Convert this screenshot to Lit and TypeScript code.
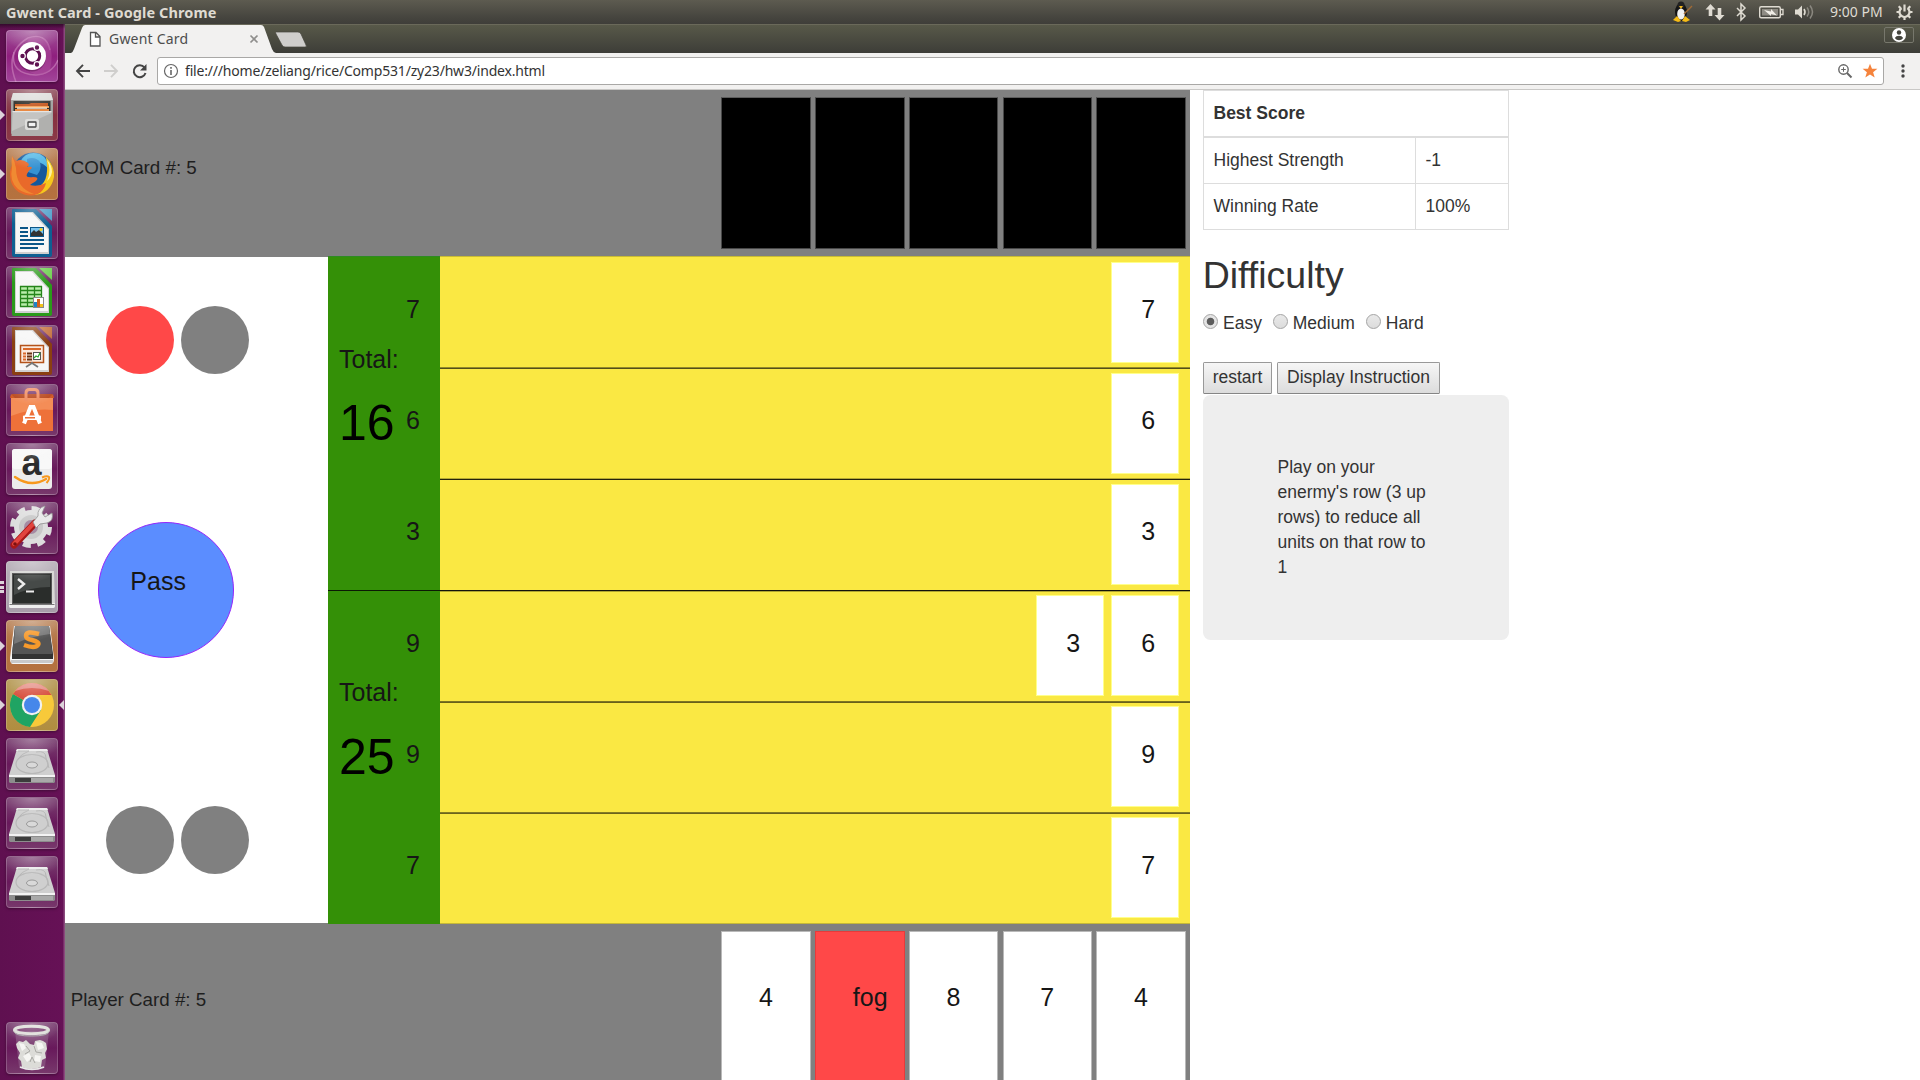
import { LitElement, html, css, svg, SVGTemplateResult } from "lit";
import { customElement, property } from "lit/decorators.js";

/* ---------- launcher artwork, every icon on a 52 x 52 grid ---------- */

const doc = (edge: string, light: string, body: SVGTemplateResult) => svg`
  <path d="M7 2h23l16 17v29q0 2-2 2H8q-2 0-2-2V3q0-1 1-1z" fill=${edge}/>
  <path d="M33 2h13v12z" fill=${light}/>
  <path d="M9 5h18l16 17v25H9z" fill="#d0d0d0"/>
  <path d="M10 6h16l16 17v22H10z" fill="#f7f7f7"/>
  ${body}`;

const drive = svg`
  <path d="M11 11h30l8 26H3z" fill="#cfcfcf"/>
  <path d="M11 11h30l1 2H10z" fill="#ececec"/>
  <path d="M12 13h11q-8 3-11 8M30 14q10-2 10 6l3 10" fill="none" stroke="#b5b5b5" stroke-width="1"/>
  <ellipse cx="26" cy="26" rx="16" ry="9.500" fill="none" stroke="#b8b8b8" stroke-width="1.200"/>
  <ellipse cx="26" cy="27" rx="5.500" ry="3" fill="#d9d9d9" stroke="#9a9a9a" stroke-width="1"/>
  <path d="M3 37h46v2H3z" fill="#f3f3f3"/>
  <path d="M3 39h46v5l-1 1H4l-1-1z" fill="#8d8d8d"/>
  <path d="M9 40h16v4H9z" fill="#3c3c3c"/>
  <path d="M25 40h22v4H25z" fill="#a9a9a9"/>`;

const art: Record<string, SVGTemplateResult> = {
  ubuntu: svg`
    <path d="M10 52Q-2 22 22 8Q40 2 44 20" fill="none" stroke="#c67ab8" stroke-width="1.500" opacity=".7"/>
    <path d="M8 22Q4 44 30 45Q46 44 52 30" fill="none" stroke="#c67ab8" stroke-width="1.500" opacity=".7"/>
    <path d="M22 8Q52 4 44 40Q34 48 24 42z" fill="#b04fa0" opacity=".5"/>
    <circle cx="26" cy="27.500" r="14" fill="#5b1450" opacity=".5"/>
    <circle cx="26" cy="26" r="14" fill="#fff"/>
    <circle cx="26.500" cy="26" r="7.200" fill="none" stroke="#5e1150" stroke-width="3"/>
    <g fill="#5e1150" stroke="#fff" stroke-width="1.200">
      <circle cx="16.500" cy="26" r="2.800"/><circle cx="31" cy="17.500" r="2.800"/><circle cx="31" cy="34.500" r="2.800"/>
    </g>`,
  files: svg`
    <path d="M7 4h38l2 7v33q0 1-1 1H6q-1 0-1-1V11z" fill="#a4a4a2"/>
    <path d="M7 4h38l2 7H5z" fill="#dededc"/>
    <path d="M7.500 12h37v11h-37z" fill="#33332f"/>
    <path d="M9 15h14l2-1h17v4H9z" fill="#c75a22"/>
    <path d="M9 17h34v2H9z" fill="#f3a45d"/>
    <path d="M11 18.500h30v1.300H11z" fill="#fff1df"/>
    <path d="M9 20h34v2H9z" fill="#e98a44"/>
    <path d="M6.500 22h39l1 25h-41z" fill="#b0b0ae"/>
    <path d="M6.500 22h39v1.500h-39z" fill="#e5e5e3"/>
    <path d="M6.500 24h39L6 42z" fill="#c4c4c2"/>
    <rect x="19" y="30" width="14" height="11" rx="2" fill="#dededc"/>
    <rect x="22" y="33" width="8" height="5" rx=".5" fill="#f2f2f2" stroke="#444" stroke-width="1.300"/>`,
  firefox: svg`
    <circle cx="27" cy="25" r="20.500" fill="#15589c"/>
    <path d="M14 14Q20 2 34 6Q42 10 43 22Q36 12 27 15z" fill="#4ab4e6"/>
    <path d="M21 11Q29 8 34 14Q36 22 31 27L22 24z" fill="#3592d2"/>
    <path d="M40 9Q49 18 48 29Q45 45 29 47Q24 42 34 38Q44 31 40 9z" fill="#f6c71d"/>
    <path d="M41 12Q46 22 41 33Q45 30 46 24Q46 17 41 12z" fill="#fff2a0"/>
    <path d="M6 8Q8 12 10 13Q16 10 22 15Q24 17 21 19Q26 18 26 20Q22 23 21 26Q19 30 27 29Q34 29 30 33Q25 36 24 37Q32 39 40 35Q37 47 25 47.500Q10 47 5 34Q2 22 7 16z" fill="#e9692a"/>
    <path d="M6 20Q3 33 12 41Q19 46 28 46Q10 40 10 20Q9 14 6 8Q5 14 6 20z" fill="#f08a32"/>`,
  writer: doc("#0e5f92", "#4f9fca", svg`
    <g stroke="#0b5688" stroke-width="2"><path d="M14 21h8M14 25h8M14 29h8M14 33h24M14 37h24M14 41h18"/></g>
    <rect x="24.500" y="20.500" width="13" height="9" fill="#7cc4ee" stroke="#0b5688"/>
    <path d="M25 29v-3l3-3 2 2 3-2 4 4v2z" fill="#333"/><circle cx="35" cy="22.500" r="1.500" fill="#f5d020"/>`),
  calc: doc("#2a9a1a", "#6cd04d", svg`
    <rect x="14" y="20" width="22" height="20" fill="#b9edaa"/>
    <path d="M14 20.500h22M14 24.500h22M14 28.500h22M14 32.500h22M14 36.500h22M14 40.500h22M14.500 20v21M21.500 20v21M28.500 20v21M35.500 20v12" stroke="#25851a" stroke-width="1.300"/>
    <rect x="27.500" y="31.500" width="10" height="10" fill="#fff" stroke="#888"/>
    <path d="M28 36h3v5h-3z" fill="#1c83c7"/><path d="M31 33h3v8h-3z" fill="#d35f1c"/><path d="M34 38h3v3h-3z" fill="#f1c21a"/>`),
  impress: doc("#8a3f12", "#c4703c", svg`
    <rect x="14.500" y="20.500" width="23" height="17" fill="#fbe9dd" stroke="#b4531b" stroke-width="1.500"/>
    <path d="M17 24h18" stroke="#d9692a" stroke-width="2"/>
    <path d="M17 28.500h3M17 31.500h3M17 34.500h3" stroke="#d9692a" stroke-width="2"/><path d="M21 28.500h5M21 31.500h5M21 34.500h5" stroke="#6a3212" stroke-width="2"/>
    <rect x="27.500" y="27.500" width="7" height="7" fill="#fff" stroke="#555"/><path d="M28 33l2-2 2 1 2-4" stroke="#2ba52b" fill="none" stroke-width="1.300"/>
    <path d="M26 37v2M20 42l6-4 6 4" stroke="#777" stroke-width="1.800" fill="none"/>`),
  software: svg`
    <path d="M6 10h40l1 4H5z" fill="#b8451a"/>
    <path d="M5 14h42v33H5z" fill="#ee7139"/><path d="M5 14h42v12Q26 24 5 32z" fill="#f48d57"/>
    <path d="M5 10l-1 4h5M47 10l1 4h-5" fill="#d15620"/>
    <path d="M20 17V9q0-3.500 3.500-3.500h5Q32 5.500 32 9v8" fill="none" stroke="#f0895c" stroke-width="3"/>
    <path d="M18 39.500L24.500 23h3L34 39.500" fill="none" stroke="#fff" stroke-width="4"/>
    <rect x="17" y="31.500" width="18" height="4.500" rx="1" fill="#fff"/><path d="M19 33.700h10" stroke="#ee7139" stroke-width="1.500"/>`,
  amazon: svg`
    <rect x="6" y="6" width="40" height="40" rx="3" fill="#ececec"/>
    <rect x="6" y="6" width="40" height="20" rx="3" fill="#f8f8f8"/>
    <text x="15.500" y="32" font-family="Liberation Sans" font-weight="700" font-size="36" fill="#2b2b2b">a</text>
    <path d="M9 34Q25 45 40 36" fill="none" stroke="#f7981d" stroke-width="2.500" stroke-linecap="round"/>
    <path d="M36 34.500q5-2 7-.5q1 2-2.500 6" fill="none" stroke="#f7981d" stroke-width="2"/>`,
  settings: svg`
    <circle cx="25" cy="25" r="18.500" fill="none" stroke="#dcdcdc" stroke-width="5" stroke-dasharray="8 6.530"/>
    <circle cx="25" cy="25" r="17" fill="#dedede"/><circle cx="25" cy="25" r="12" fill="#c9c9c9"/><circle cx="25" cy="25" r="7" fill="#a58aa2"/>
    <path d="M8 43L29 21" stroke="#a81818" stroke-width="7" stroke-linecap="round"/>
    <path d="M8 42L28 21" stroke="#e2443e" stroke-width="4" stroke-linecap="round"/>
    <circle cx="9" cy="42" r="1.800" fill="#7b1010"/>
    <path d="M27 20l5-6q-1-8 7-10l-3 7 3 4 7-4q2 8-5 10l-7 1-4 4z" fill="#e9e9e9" stroke="#8b8b8b" stroke-width=".8"/>`,
  terminal: svg`
    <path d="M4 10h44l1 34q0 3-2 3H5q-2 0-2-3z" fill="#d8d8d6"/><path d="M3 42h46v3q0 2-2 2H5q-2 0-2-2z" fill="#eee"/>
    <path d="M3.500 43.500h45" stroke="#777" stroke-width="1"/>
    <rect x="6.500" y="12.500" width="39" height="30" fill="#2a2d2b" stroke="#555"/>
    <path d="M8 14h36v12Q24 26 8 34z" fill="#464a48"/>
    <path d="M12 18l6 5-6 5" fill="none" stroke="#eee" stroke-width="2.400"/><path d="M20 30.500h8" stroke="#eee" stroke-width="2"/>`,
  sublime: svg`
    <path d="M8 6h36l4 32q0 6-3 6H7q-3 0-3-6z" fill="#f4f4f4"/><path d="M5 40h42v3H5z" fill="#c9c9c9"/>
    <path d="M9 6h34l4 28v5H6v-5z" fill="#333"/><path d="M9 6h34l3.500 28H6z" fill="#555"/><path d="M9 6h34l1 8Q26 16 8 24z" fill="#777"/>
    <path d="M33 14Q20 10 20 16Q20 19 26 20Q34 22 32 25Q29 29 18 25" fill="none" stroke="#f79a2b" stroke-width="4.500"/>`,
  chrome: svg`
    <circle cx="26" cy="26" r="22" fill="#f7c93a"/>
    <path d="M26 26L7 15A22 22 0 0 0 24 48L35 31z" fill="#1fa463"/>
    <path d="M26 26L7 15A22 22 0 0 1 45.500 16H26z" fill="#d85140"/><path d="M9 12A22 22 0 0 1 43 12Q26 6 9 12z" fill="#e58d84"/>
    <circle cx="26" cy="26" r="10.200" fill="#f1f1f1"/><circle cx="26" cy="26" r="8" fill="#4687ea"/>`,
  drive,
  trash: svg`
    <path d="M9 9l4 36q0 3 13 3t13-3l4-36z" fill="#8a5582" opacity=".75"/>
    <path d="M10 22l3-3 4 1 3-2 4 4 4 1 1-4 5-1 3 1 3 2 1 6-2 4 1 5-4 2-1 7q-10 4-19 0l-1-6-3-3 2-5-3-5z" fill="#dcdcd8"/>
    <path d="M13 21l5 1 2 4-4 3zM30 20l6 1 2 5-6 2zM17 34l6-3 3 5-5 4zM29 33l6 1-1 6-6-1z" fill="#f6f6f3"/>
    <path d="M20 24l4 5-5 3M28 24l2 6 6 1M24 40l2-5 3 6" fill="none" stroke="#aaaaa5"/>
    <path d="M14 45q12 5 24 0" fill="none" stroke="#e9e9e9" stroke-width="1.500"/>
    <ellipse cx="25.500" cy="8" rx="17" ry="3.700" fill="none" stroke="#deded9" stroke-width="3"/>
    <path d="M8 9.500q1 4.500 17.500 4.500T43 9.500" fill="none" stroke="#aaa" stroke-width="1"/>`,
};

@customElement("launcher-tile")
export class LauncherTile extends LitElement {
  @property() icon = "drive";
  @property() tone = "plain";
  @property() left = "";
  @property({ type: Boolean }) focused = false;

  static styles = css`
    :host { display: block; position: relative; width: 65px; height: 52px; flex: none; }
    .tile { box-sizing: border-box; width: 52px; height: 52px; margin-left: 6px; border-radius: 4px; box-shadow: 0 1px 3px rgba(0,0,0,.35); position: relative; overflow: hidden; }
    .tile svg { display: block; }
    .shine { position: absolute; inset: 0; border: 1px solid rgba(255,255,255,.2); border-radius: 4px; background: radial-gradient(ellipse 60% 40% at 50% 0, rgba(255,255,255,.32), rgba(255,255,255,0)); }
    .plain { background: linear-gradient(#7d4675, #68195b 50%, #78396c); }
    .ubuntu { background: linear-gradient(#a2559a, #8f1f7e 50%, #a2459a); }
    .red { background: linear-gradient(#965a68, #863040 50%, #8b3a48); }
    .orange { background: linear-gradient(#bd8a62, #b3703f 50%, #b5723f); }
    .gray { background: linear-gradient(#b9b1ba, #a79da9); }
    .gold { background: linear-gradient(#b79b58, #b08d3f); }
    .mark { position: absolute; left: 0; top: 21px; width: 0; height: 0; border: 5px solid transparent; border-left-color: #dcd3da; border-right: 0; }
    .here { position: absolute; right: 1px; top: 21px; width: 0; height: 0; border: 5px solid transparent; border-right-color: #dcd3da; border-left: 0; }
    .bars { position: absolute; left: 0; top: 20px; width: 4px; height: 12px; background: repeating-linear-gradient(#dcd3da 0 3px, transparent 3px 4.500px); }
  `;

  render() {
    return html`
      <div class="tile ${this.tone}"><svg width="52" height="52" viewBox="0 0 52 52">${art[this.icon]}</svg><div class="shine"></div></div>
      ${this.left === "arrow" ? html`<i class="mark"></i>` : ""}
      ${this.left === "bars" ? html`<i class="bars"></i>` : ""}
      ${this.focused ? html`<i class="here"></i>` : ""}`;
  }
}

@customElement("top-panel")
export class TopPanel extends LitElement {
  static styles = css`
    :host { display: flex; box-sizing: border-box; height: 24px; padding: 0 7px 0 6px; align-items: center; justify-content: space-between; background: linear-gradient(#5d5b50, #45443e 75%, #3f3e39); color: #dfdbd2; font-family: "Noto Sans", sans-serif; }
    .title { font-size: 14.500px; font-weight: 700; line-height: 24px; letter-spacing: .1px; white-space: nowrap; }
    .tray { display: flex; align-items: center; height: 24px; }
    .tray svg { display: block; flex: none; }
    .clock { font-size: 14px; line-height: 24px; width: 53px; margin: 0 13px 0 15px; white-space: nowrap; letter-spacing: 0; }
  `;
  render() {
    return html`
      <div class="title">Gwent Card - Google Chrome</div>
      <div class="tray">
        <svg width="142" height="24" viewBox="0 0 142 24">
          <ellipse cx="8" cy="12" rx="6" ry="9" fill="#151515"/><circle cx="8" cy="5" r="3.500" fill="#222"/>
          <ellipse cx="8" cy="14" rx="3.800" ry="5.500" fill="#f1f1f1"/><path d="M6 6h4l-2 3z" fill="#f2b51a"/>
          <path d="M0 20l4-4 4 5-3 1zM9 21l3-5 5 4-4 2z" fill="#f5bb16"/><path d="M11 14l8-8" stroke="#a06a35" stroke-width="1.500"/>
          <path d="M37.500 4l5 5.500h-3.200v6.500h-3.600V9.500h-3.200zM46.500 20.500l-5-5.500h3.200V8h3.600v7h3.200z" fill="#dfdbd2"/>
          <path d="M64 8l8 8-4 4V4l4 4-8 8" fill="none" stroke="#dfdbd2" stroke-width="1.500"/>
          <rect x="86.700" y="6.700" width="20.600" height="11" rx="1.500" fill="none" stroke="#dfdbd2" stroke-width="1.400"/>
          <path d="M108 9.500h2v5h-2" fill="none" stroke="#dfdbd2" stroke-width="1.300"/>
          <rect x="89" y="9" width="16" height="6.500" fill="#8e8b83"/><path d="M91 10l7 1.500V9l6 6.500-6-1.500v2z" fill="#f0ede6"/>
          <path d="M122 9.500h3l4-4v13l-4-4h-3z" fill="#dfdbd2"/>
          <path d="M131 9q2 3 0 6" fill="none" stroke="#dfdbd2" stroke-width="1.600"/>
          <path d="M134 7.500q3.500 4.500 0 9M137 5.500q5 6.500 0 13" fill="none" stroke="#8b8880" stroke-width="1.500"/>
        </svg>
        <div class="clock">9:00 PM</div>
        <svg width="17" height="18" viewBox="0 0 17 18">
          <path d="M5.500 5a5 5 0 1 0 6 0" fill="none" stroke="#dfdbd2" stroke-width="2.200"/>
          <path d="M8.500 1.500v7M.5 9h2.500M14 9h2.500M2.700 3.200l2 2M14.300 3.200l-2 2M2.700 14.800l2-2M14.300 14.800l-2-2M8.500 14v3" stroke="#dfdbd2" stroke-width="2.200"/>
        </svg>
      </div>`;
  }
}

@customElement("browser-chrome")
export class BrowserChrome extends LitElement {
  static styles = css`
    :host { display: block; font-family: "Noto Sans", sans-serif; }
    .strip { display: flex; box-sizing: border-box; height: 29px; padding: 0 6px 0 6px; justify-content: space-between; background: linear-gradient(#6a695a 0 1px, #585949 1px, #3d3d38); }
    .tabs { display: flex; position: relative; }
    .tabshape { display: block; }
    .label { position: absolute; left: 38px; top: 5px; height: 20px; line-height: 20px; font-size: 14px; color: #4d4d4d; white-space: nowrap; letter-spacing: .2px; }
    .avatar { box-sizing: border-box; width: 30px; height: 16px; margin-top: 3px; border: 1px solid #77776c; border-radius: 2px; display: flex; justify-content: center; align-items: center; }
    .bar { display: flex; align-items: center; box-sizing: border-box; height: 37px; padding: 0 0 1px 10px; background: #f2f1f0; border-bottom: 1px solid #c9c8c6; }
    .nav { display: block; flex: none; }
    .field { box-sizing: border-box; width: 1727px; height: 28px; border: 1px solid #a9a8a6; border-radius: 3px; background: #fff; display: flex; align-items: center; padding: 0 5px 0 5px; }
    .url { flex: 1; margin-left: 6px; font-size: 14px; line-height: 20px; color: #333; white-space: nowrap; letter-spacing: -.19px; }
    .dots { margin-left: 15.500px; }
  `;
  render() {
    return html`
      <div class="strip">
        <div class="tabs">
          <svg class="tabshape" width="240" height="29" viewBox="0 0 240 29">
            <path d="M0 29Q2 28 3 25L11 4Q12 1 14 1H190Q192 1 193 3L201 25Q202 28 205 29z" fill="#f2f1f0"/>
            <path d="M19.500 8.500h5.500l4 4v9.500h-9.500zM24.500 8.500v4.500h4.500" fill="#fff" stroke="#555" stroke-width="1.300"/>
            <path d="M179.500 11.500l7 7M186.500 11.500l-7 7" stroke="#8f8e8c" stroke-width="1.700"/>
            <path d="M205 8h22q2 0 3 2l5 11q1 2-1 2h-20q-2 0-3-2l-6-11q-1-2 0-2z" fill="#cfcecc" stroke="#45453c" stroke-width=".7"/>
          </svg>
          <div class="label">Gwent Card</div>
        </div>
        <div class="avatar"><svg width="14" height="14" viewBox="0 0 14 14"><circle cx="7" cy="7" r="7" fill="#fff"/><circle cx="7" cy="4.500" r="2.200" fill="#44443d"/><path d="M2.800 10q1.200-2.200 4.200-2.200T11.200 10Q9.500 12.200 7 12.200T2.800 10z" fill="#44443d"/></svg></div>
      </div>
      <div class="bar">
        <svg class="nav" width="82" height="20" viewBox="0 0 82 20">
          <path d="M15 10H2.500M8 3.800L2 10l6 6.200" fill="none" stroke="#444" stroke-width="1.900"/>
          <path d="M29 10h12.500M36 3.800L42 10l-6 6.200" fill="none" stroke="#cfcecc" stroke-width="1.900"/>
          <path d="M69.500 6.500A6 6 0 1 0 70.500 12" fill="none" stroke="#444" stroke-width="2"/><path d="M71.500 3v6.500H65z" fill="#444"/>
        </svg>
        <div class="field">
          <svg width="16" height="16" viewBox="0 0 16 16"><circle cx="8" cy="8" r="6.500" fill="none" stroke="#666" stroke-width="1.200"/><path d="M8 7v5M8 4v1.800" stroke="#666" stroke-width="1.600"/></svg>
          <div class="url">file:///home/zeliang/rice/Comp531/zy23/hw3/index.html</div>
          <svg width="40" height="16" viewBox="0 0 40 16">
            <circle cx="5.500" cy="6.500" r="4.700" fill="none" stroke="#666" stroke-width="1.400"/><path d="M9 10l4.500 4.500" stroke="#666" stroke-width="2"/><path d="M5.500 4.200v4.600M3.200 6.500h4.600" stroke="#666" stroke-width="1"/>
            <path d="M32 .8l2 5h5.400l-4.300 3.400 1.600 5.400L32 11.500l-4.700 3.100 1.600-5.400-4.300-3.400H30z" fill="#f5833c"/>
          </svg>
        </div>
        <svg class="dots" width="6" height="16" viewBox="0 0 6 16"><g fill="#444"><circle cx="3" cy="3" r="1.700"/><circle cx="3" cy="8" r="1.700"/><circle cx="3" cy="13" r="1.700"/></g></svg>
      </div>`;
  }
}

interface BoardRow { cards: number[]; height: number; top: number; line: string; }

@customElement("gwent-board")
export class GwentBoard extends LitElement {
  private rows: BoardRow[] = [
    { cards: [7], height: 113, top: 6, line: "l1" },
    { cards: [6], height: 111, top: 4, line: "l2" },
    { cards: [3], height: 112, top: 4, line: "l3" },
    { cards: [3, 6], height: 111, top: 3, line: "l4 lower" },
    { cards: [9], height: 111, top: 3, line: "l5 lower" },
    { cards: [7], height: 110, top: 3, line: "l6 lower" },
  ];
  private hand = ["4", "fog", "8", "7", "4"];

  static styles = css`
    :host { display: flex; flex-direction: column; width: 1125px; height: 990px; flex: none; overflow: hidden; background: #808080; color: #161616; font: 25px "Liberation Sans", Arial, sans-serif; }
    .strip { display: flex; justify-content: space-between; box-sizing: border-box; height: 166px; padding: 7px 4.250px 0 5.700px; flex: none; }
    .player { height: 170px; }
    .name { font-size: 18.750px; line-height: 22px; padding-top: 60px; color: #1e1e1e; white-space: nowrap; }
    .player .name { padding-top: 58px; }
    .hand { display: flex; gap: 4.250px; }
    .held { box-sizing: border-box; width: 89.500px; height: 152px; border: 1px solid #b9b9b9; background: #fff; line-height: 131px; padding-left: 36.800px; }
    .back { background: #000; border-color: #484848; border-top-color: #5c5c5c; }
    .fog { background: #ff4848; border-color: #e83a3a; }
    .mid { display: flex; height: 668px; flex: none; }
    .side { display: flex; flex-direction: column; box-sizing: border-box; width: 263px; margin: 1px 0; height: 666px; background: #fff; padding: 49px 0 49px 33px; justify-content: space-between; }
    .pair { display: flex; gap: 7px; padding-left: 8px; }
    .gem { width: 68px; height: 68px; border-radius: 50%; background: #808080; }
    .lit { background: #ff4848; }
    .pass { box-sizing: border-box; width: 136px; height: 136px; border-radius: 50%; border: 1px solid #9426fb; background: #5b8dff; padding-left: 31.300px; line-height: 116px; }
    .scores { width: 112px; background: #349007; box-shadow: inset 0 1px #2e8a23; }
    .half { display: flex; box-sizing: border-box; height: 335px; border-bottom: 1px solid #0b1a04; padding-top: 6px; }
    .low { height: 333px; border-bottom: 0; padding-top: 4px; }
    .sum { width: 67px; padding: 83px 0 0 11px; }
    .word { line-height: 28px; white-space: nowrap; }
    .big { font-size: 50px; line-height: 56px; margin-top: 22px; color: #000; }
    .low .big { margin-top: 23px; }
    .each { line-height: 94px; }
    .low .each { padding-top: 1px; }
    .each div { height: 111px; }
    .field { width: 750px; background: #fae843; }
    .row { display: flex; justify-content: flex-end; gap: 7px; box-sizing: border-box; padding-right: 11px; }
    .card { box-sizing: border-box; width: 68px; height: 101px; border: 1px solid #ffff8c; background: #fff; line-height: 92px; padding-left: 29.300px; }
    .lower .card { line-height: 94px; }
    .l1 { background: linear-gradient(#fae843 111px, #938a29 111px 112px, #544e18 112px); box-shadow: inset 0 1px #c9bb34; }
    .l2 { background: linear-gradient(#fae843 109px, #b5a932 109px 110px, #25220b 110px); }
    .l3 { background: linear-gradient(#fae843 110px, #14130a 110px 111px, #b0a431 111px); }
    .l4 { background: linear-gradient(#fae843 109px, #7d7522 109px 110px, #686019 110px); }
    .l5 { background: linear-gradient(#fae843 109px, #857c24 109px 110px, #6b631c 110px); }
    .l6 { background: linear-gradient(#fae843 109px, #c5b838 109px); }
  `;

  private half(sum: number, rows: BoardRow[], low: boolean) {
    return html`<div class="half ${low ? "low" : ""}">
      <div class="sum"><div class="word">Total:</div><div class="big">${sum}</div></div>
      <div class="each">${rows.map(r => html`<div>${r.cards.reduce((a, b) => a + b, 0)}</div>`)}</div>
    </div>`;
  }

  render() {
    return html`
      <div class="strip">
        <div class="name">COM Card #: 5</div>
        <div class="hand">${this.hand.map(() => html`<div class="held back"></div>`)}</div>
      </div>
      <div class="mid">
        <div class="side">
          <div class="pair"><div class="gem lit"></div><div class="gem"></div></div>
          <div class="pass">Pass</div>
          <div class="pair"><div class="gem"></div><div class="gem"></div></div>
        </div>
        <div class="scores">
          ${this.half(16, this.rows.slice(0, 3), false)}
          ${this.half(25, this.rows.slice(3), true)}
        </div>
        <div class="field">
          ${this.rows.map(r => html`<div class="row ${r.line}" style="height:${r.height}px;padding-top:${r.top}px">
            ${r.cards.map(c => html`<div class="card">${c}</div>`)}
          </div>`)}
        </div>
      </div>
      <div class="strip player">
        <div class="name">Player Card #: 5</div>
        <div class="hand">${this.hand.map(c => html`<div class="held ${c === "fog" ? "fog" : ""}">${c}</div>`)}</div>
      </div>`;
  }
}

@customElement("score-panel")
export class ScorePanel extends LitElement {
  static styles = css`
    :host { display: block; width: 306px; margin-left: 13px; flex: none; color: #333; font: 17.500px/25px "Liberation Sans", Arial, sans-serif; }
    .table { display: grid; grid-template-columns: 212px 1fr; box-sizing: border-box; border: 1px solid #ddd; height: 140px; grid-template-rows: 47px 46px 45px; }
    .head { grid-column: 1 / 3; font-weight: 700; border-bottom: 2px solid #ddd; padding: 10px 9.500px 0; box-sizing: border-box; }
    .cell { padding: 10px 9.500px 0; box-sizing: border-box; border-bottom: 1px solid #ddd; }
    .name { border-right: 1px solid #ddd; }
    .last { border-bottom: 0; }
    h2 { font-size: 37.500px; line-height: 41px; font-weight: 500; margin: 25px 0 15px -.3px; font-variant-ligatures: none; }
    .levels { display: flex; height: 25px; }
    .level { display: flex; margin-right: 10.800px; }
    .knob { box-sizing: border-box; width: 15px; height: 15px; margin: 3px 5px 0 0; border-radius: 50%; border: 1px solid #a4a4a4; background: linear-gradient(#e9e9e9, #dcdcdc); }
    .on { background: radial-gradient(circle, #5c5c5c 0 3.400px, #e4e4e4 4.200px); }
    .buttons { display: flex; gap: 5px; margin-top: 26px; }
    .btn { box-sizing: border-box; height: 32px; border: 1px solid #999; border-bottom-color: #858585; border-radius: 1.500px; background: linear-gradient(#f6f6f6, #dcdcdc); line-height: 29px; width: 69px; text-align: center; white-space: nowrap; }
    .wide { width: 163px; }
    .tip { box-sizing: border-box; height: 245px; margin-top: 1px; border-radius: 7.500px; background: #eee; padding: 60px 73px 0 74.500px; }
  `;
  render() {
    return html`
      <div class="table">
        <div class="head">Best Score</div>
        <div class="cell name">Highest Strength</div><div class="cell">-1</div>
        <div class="cell name last">Winning Rate</div><div class="cell last">100%</div>
      </div>
      <h2>Difficulty</h2>
      <div class="levels">
        ${["Easy", "Medium", "Hard"].map((n, i) => html`<div class="level"><span class="knob ${i === 0 ? "on" : ""}"></span>${n}</div>`)}
      </div>
      <div class="buttons"><div class="btn">restart</div><div class="btn wide">Display Instruction</div></div>
      <div class="tip">Play on your enermy's row (3 up rows) to reduce all units on that row to 1</div>`;
  }
}

@customElement("app-root")
export class AppRoot extends LitElement {
  static styles = css`
    :host { display: flex; flex-direction: column; width: 1920px; height: 1080px; overflow: hidden; background: #fff; }
    .desk { display: flex; height: 1056px; }
    .launcher { display: flex; flex-direction: column; gap: 7px; box-sizing: border-box; width: 65px; height: 1056px; padding: 6px 0; flex: none; background: linear-gradient(rgba(0,0,0,.45), transparent 5px), linear-gradient(90deg, #5f1050, #661156 63px, #8a4a7d 64px); }
    .bin { margin-top: auto; }
    .window { flex: 1; }
    .page { display: flex; height: 990px; background: #fff; }
  `;
  private tiles = [
    ["ubuntu", "ubuntu", ""], ["files", "red", "arrow"], ["firefox", "orange", "arrow"], ["writer", "plain", ""],
    ["calc", "plain", ""], ["impress", "plain", ""], ["software", "plain", ""], ["amazon", "plain", ""],
    ["settings", "plain", ""], ["terminal", "gray", "bars"], ["sublime", "orange", "arrow"], ["chrome", "gold", "arrow"],
    ["drive", "plain", ""], ["drive", "plain", ""], ["drive", "plain", ""],
  ];
  render() {
    return html`
      <top-panel></top-panel>
      <div class="desk">
        <div class="launcher">
          ${this.tiles.map(([i, t, l]) => html`<launcher-tile .icon=${i} .tone=${t} .left=${l} .focused=${i === "chrome"}></launcher-tile>`)}
          <launcher-tile class="bin" .icon=${"trash"}></launcher-tile>
        </div>
        <div class="window">
          <browser-chrome></browser-chrome>
          <div class="page"><gwent-board></gwent-board><score-panel></score-panel></div>
        </div>
      </div>`;
  }
}
